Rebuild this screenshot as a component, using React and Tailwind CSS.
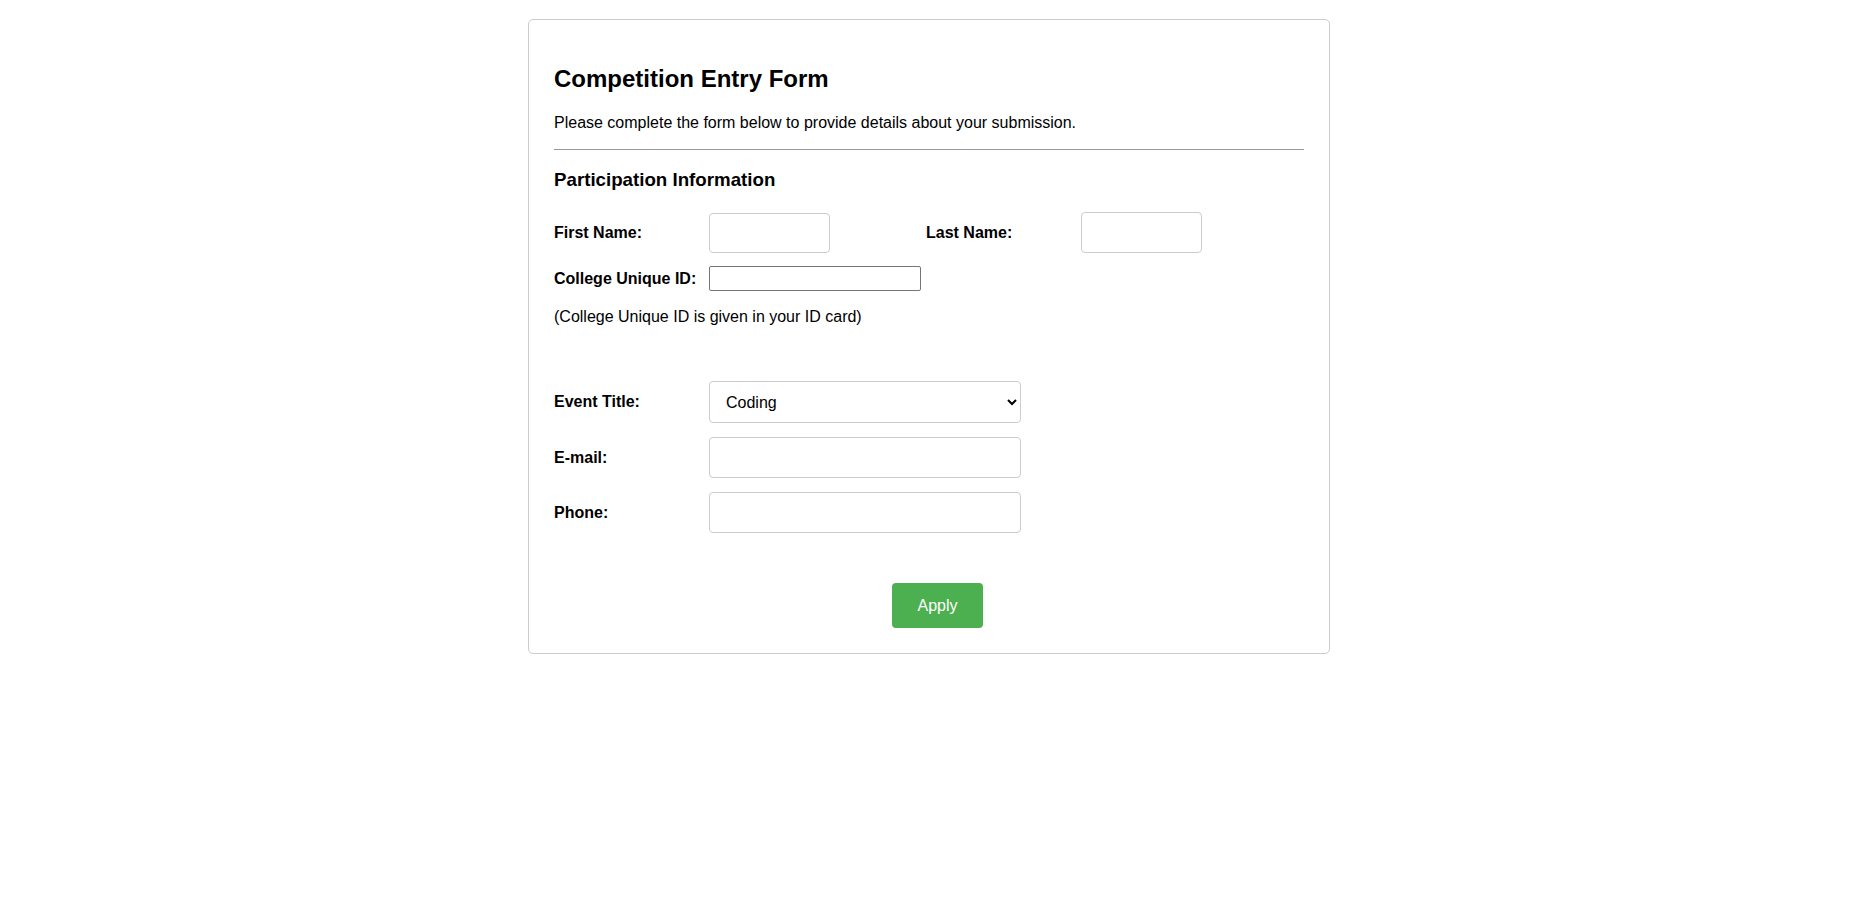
export default function App() {
  return (
    <div className="min-h-screen bg-white text-black" style={{ fontFamily: '"Liberation Sans", Arial, sans-serif' }}>
      <div className="pt-[19px] pl-[3px]">
        <div className="mx-auto w-[802px] rounded-[5px] border border-[#cccccc] px-[25px] pt-[25px] pb-[25px]">
          <h2 className="mt-[20px] text-[24px] font-bold leading-[28px]">Competition Entry Form</h2>
          <p className="mt-[20px] text-[16px] leading-[20px]">
            Please complete the form below to provide details about your submission.
          </p>
          <div className="mt-[16px] border-t border-[#999999]" />
          <h3 className="mt-[19px] text-[18.72px] font-bold leading-[22px]">Participation Information</h3>

          <div className="mt-[21px] flex items-center">
            <label className="w-[155px] text-[16px] font-bold leading-[20px]">First Name:</label>
            <input type="text" className="h-[40px] w-[121px] rounded-[4px] border border-[#cccccc] px-[10px] text-[16px] outline-none" />
            <label className="ml-[96px] w-[155px] text-[16px] font-bold leading-[20px]">Last Name:</label>
            <input type="text" className="h-[41px] w-[121px] rounded-[4px] border border-[#cccccc] px-[10px] text-[16px] outline-none" />
          </div>

          <div className="mt-[13px] flex items-center">
            <label className="w-[155px] text-[16px] font-bold leading-[20px]">College Unique ID:</label>
            <input type="text" className="h-[25px] w-[212px] rounded-[2px] border border-[#767676] px-[2px] text-[13px] outline-none" />
          </div>

          <p className="mt-[16px] text-[16px] leading-[20px]">(College Unique ID is given in your ID card)</p>

          <div className="mt-[54px] flex items-center">
            <label className="w-[155px] text-[16px] font-bold leading-[20px]">Event Title:</label>
            <select className="h-[42px] w-[312px] rounded-[4px] border border-[#cccccc] bg-white pl-[12px] pr-[8px] text-[16px] outline-none" defaultValue="Coding">
              <option>Coding</option>
              <option>Design</option>
              <option>Quiz</option>
            </select>
          </div>

          <div className="mt-[14px] flex items-center">
            <label className="w-[155px] text-[16px] font-bold leading-[20px]">E-mail:</label>
            <input type="email" className="h-[41px] w-[312px] rounded-[4px] border border-[#cccccc] px-[10px] text-[16px] outline-none" />
          </div>

          <div className="mt-[14px] flex items-center">
            <label className="w-[155px] text-[16px] font-bold leading-[20px]">Phone:</label>
            <input type="tel" className="h-[41px] w-[312px] rounded-[4px] border border-[#cccccc] px-[10px] text-[16px] outline-none" />
          </div>

          <div className="mt-[50px] flex">
            <button className="ml-[338px] h-[45px] w-[91px] rounded-[4px] bg-[#4caf50] text-[16px] text-white">
              Apply
            </button>
          </div>
        </div>
      </div>
    </div>
  );
}
